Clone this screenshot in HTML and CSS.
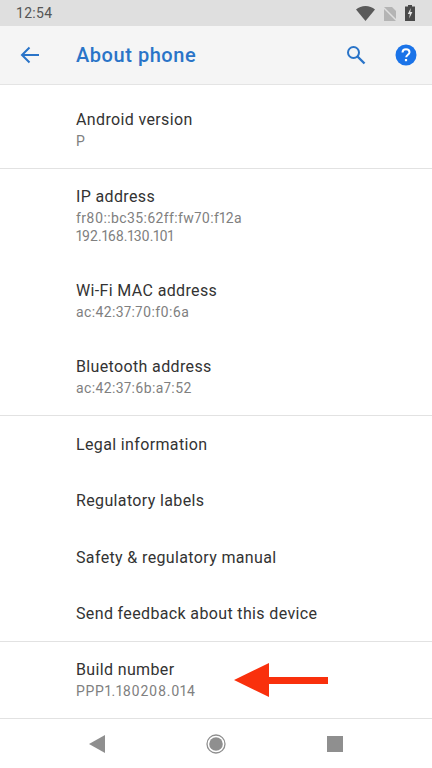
FILE: index.html
```html
<!DOCTYPE html>
<html>
<head>
    <title>About phone</title>
    <link rel="stylesheet" href="styles.css">
</head>
<body>

<div class="screen">
    <div class="status-bar">
        <span class="clock">12:54</span>
        <div class="status-icons">
            <svg width="19" height="15" viewBox="0 0 19 15"><path d="M0 3.600C2.600 1.400 5.900 0 9.500 0s6.900 1.400 9.500 3.600L9.500 15z" fill="#5a5a5a"/></svg>
            <svg width="14" height="15" viewBox="0 0 14 15"><path d="M1 1h8l4 4v10H1z" fill="#b4b4b4"/><path d="M0 1l14 14" stroke="#dfdfdf" stroke-width="1.500"/></svg>
            <svg width="10" height="16" viewBox="0 0 10 16"><path d="M3 0h4v1.500h3V16H0V1.500h3z" fill="#4a4a4a"/><path d="M5.800 3L2.800 9h2l-.6 4.500L7.400 7H5.300z" fill="#e4e4e4"/></svg>
        </div>
    </div>

    <div class="toolbar">
        <svg class="back-icon" width="20" height="18" viewBox="0 0 20 18"><path d="M19 9H2M9.500 1.500L2 9l7.500 7.500" fill="none" stroke="#2a74c8" stroke-width="2"/></svg>
        <h1>About phone</h1>
        <svg class="search-icon" width="20" height="20" viewBox="0 0 20 20"><circle cx="7.500" cy="7.500" r="5.500" fill="none" stroke="#2a74c8" stroke-width="2"/><path d="M11.500 11.500l7 7" stroke="#2a74c8" stroke-width="2.400"/></svg>
        <svg class="help-icon" width="22" height="22" viewBox="0 0 22 22"><circle cx="11" cy="11" r="10.500" fill="#1a73e8"/><path d="M7.500 8.500c0-2 1.500-3.300 3.500-3.300s3.500 1.300 3.500 3.100c0 2.400-3.300 2.500-3.300 5" fill="none" stroke="#fff" stroke-width="2"/><rect x="9.900" y="15" width="2.200" height="2.200" fill="#fff"/></svg>
    </div>

    <div class="section first">
        <div class="row">
            <div class="title">Android version</div>
            <div class="sub">P</div>
        </div>
    </div>

    <div class="section">
        <div class="row">
            <div class="title">IP address</div>
            <div class="sub">fr80::bc35:62ff:fw70:f12a<br><span class="ip-number">192.168.130.101</span></div>
        </div>
        <div class="row">
            <div class="title">Wi-Fi MAC address</div>
            <div class="sub">ac:42:37:70:f0:6a</div>
        </div>
        <div class="row">
            <div class="title">Bluetooth address</div>
            <div class="sub">ac:42:37:6b:a7:52</div>
        </div>
    </div>

    <div class="section">
        <div class="link-row">Legal information</div>
        <div class="link-row">Regulatory labels</div>
        <div class="link-row">Safety &amp; regulatory manual</div>
        <div class="link-row">Send feedback about this device</div>
    </div>

    <div class="section build">
        <div class="row">
            <div class="title">Build number</div>
            <div class="sub build-number">PPP1.180208.014</div>
        </div>
        <svg class="red-arrow" width="94" height="34" viewBox="0 0 94 34"><path d="M0 17L35 0v14h59v7H35v13z" fill="#f9300c"/></svg>
    </div>

    <div class="nav-bar">
        <svg width="16" height="18" viewBox="0 0 16 18"><path d="M16 0v18L0 9z" fill="#8f8f8f"/></svg>
        <svg width="20" height="20" viewBox="0 0 20 20"><circle cx="10" cy="10" r="9" fill="none" stroke="#8f8f8f" stroke-width="1.300"/><circle cx="10" cy="10" r="6.800" fill="#8f8f8f"/></svg>
        <svg width="16" height="16" viewBox="0 0 16 16"><rect width="16" height="16" fill="#8f8f8f"/></svg>
    </div>
</div>

</body>
</html>
```

FILE: styles.css
```css
body {
    margin: 0;
    background-color: #fff;
    font-family: Roboto, "Noto Sans", sans-serif;
}

.screen {
    width: 432px;
    height: 768px;
    overflow: hidden;
    display: flex;
    flex-direction: column;
}

.status-bar {
    height: 26px;
    background-color: #dfdfdf;
    display: flex;
    align-items: center;
    justify-content: space-between;
    padding: 0 17px 0 16px;
    flex-shrink: 0;
}

.clock {
    font-size: 14px;
    letter-spacing: 0.3px;
    color: #555;
}

.status-icons {
    display: flex;
    align-items: center;
    gap: 8px;
}

.toolbar {
    height: 58px;
    background-color: #f5f5f5;
    border-bottom: 1px solid #e4e4e4;
    display: flex;
    align-items: center;
    padding: 0 15px 0 20px;
    flex-shrink: 0;
}

.toolbar h1 {
    margin: 0 0 0 36px;
    font-size: 20px;
    font-weight: 500;
    letter-spacing: 0.55px;
    color: #2a74c8;
    flex: 1;
}

.search-icon {
    margin-right: 1px;
}

.help-icon {
    margin-left: 28px;
}

.section {
    border-bottom: 1px solid #e2e2e2;
    position: relative;
}

.first {
    padding-top: 7px;
}

.row {
    padding: 17px 16px 18px 76px;
}

.title {
    font-size: 16px;
    line-height: 22px;
    letter-spacing: 0.36px;
    color: #333;
}

.sub {
    margin-top: 1px;
    font-size: 14px;
    line-height: 18px;
    letter-spacing: 0.38px;
    font-variant-numeric: proportional-nums;
    color: #808080;
}

.ip-number {
    letter-spacing: 0;
}

.build-number {
    letter-spacing: 0.73px;
}

.link-row {
    height: 56.25px;
    padding: 1px 0 0 76px;
    box-sizing: border-box;
    display: flex;
    align-items: center;
    font-size: 16px;
    letter-spacing: 0.36px;
    color: #333;
}

.red-arrow {
    position: absolute;
    left: 234px;
    top: 21px;
}

.nav-bar {
    flex: 1;
    display: flex;
    align-items: center;
    justify-content: space-between;
    padding: 0 89px;
}
```
